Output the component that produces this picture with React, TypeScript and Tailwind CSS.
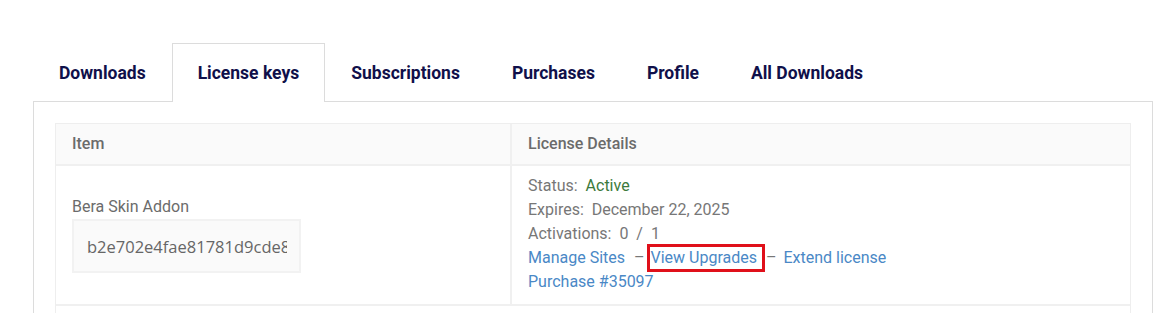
import React from 'react';

const tabs = ['Downloads', 'License keys', 'Subscriptions', 'Purchases', 'Profile', 'All Downloads'];

const App: React.FC = () => {
  const active = 'License keys';

  return (
    <div className="w-[1172px] h-[313px] overflow-hidden bg-white pt-[43px] pl-[33px] pr-[19px] font-['Roboto',sans-serif]">
      {/* Tabs */}
      <div className="flex">
        {tabs.map((t) => (
          <div
            key={t}
            className={`h-[59px] px-[25px] flex items-center text-[17.5px] font-bold text-[#10104a] border border-b-0 -mb-px relative ${
              t === active ? 'border-[#dcdcdc] bg-white z-10' : 'border-transparent'
            }`}
          >
            <span>{t}</span>
          </div>
        ))}
      </div>

      {/* Panel */}
      <div className="border border-[#dcdcdc] pt-[21px] px-[21px] pb-6">
        <div className="border border-[#eeeeee] text-[16px] text-[#707070]">
          {/* Header */}
          <div className="grid grid-cols-[456px_1fr] bg-[#fafafa] border-b-2 border-[#f0f0f0] h-[42px]">
            <div className="px-4 flex items-center font-medium text-[#6b6b6b] border-r-2 border-[#f0f0f0]">Item</div>
            <div className="px-4 flex items-center font-medium text-[#6b6b6b]">License Details</div>
          </div>
          {/* Row */}
          <div className="grid grid-cols-[456px_1fr] border-b-2 border-[#f0f0f0]">
            <div className="px-4 pt-[31px] pb-[29px] border-r-2 border-[#f0f0f0]">
              <div className="leading-[20px] text-[#6b6b6b]">Bera Skin Addon</div>
              <input
                readOnly
                value="b2e702e4fae81781d9cde8a4b1c3f0"
                className="mt-[2px] w-[229px] h-[54px] bg-[#fafafa] border-2 border-[#f2f2f2] pl-[13px] pr-[12px] font-['Open_Sans',sans-serif] text-[16.5px] text-[#666] outline-none"
              />
            </div>
            <div className="px-4 pt-[8px] pb-[10px] leading-[24px] text-[#777]">
              <div>
                Status:&nbsp; <span className="text-[#3c7a3c]">Active</span>
              </div>
              <div>Expires:&nbsp; December 22, 2025</div>
              <div>Activations:&nbsp; 0 &nbsp;/ &nbsp;1</div>
              <div className="flex items-center">
                <a className="text-[#4a88c6]">Manage Sites</a>
                <span className="ml-[9px] mr-[2px]">–</span>
                <a className="text-[#4a88c6] border-[3px] border-[#e0101a] pl-[1px] pr-[5px] h-[28px] flex items-center -my-[2px]">
                  View Upgrades
                </a>
                <span className="ml-[1px]">–</span>
                <a className="text-[#4a88c6] ml-[7px]">Extend license</a>
              </div>
              <div>
                <a className="text-[#4a88c6]">Purchase #35097</a>
              </div>
            </div>
          </div>
          <div className="h-10"></div>
        </div>
      </div>
    </div>
  );
};

export default App;
